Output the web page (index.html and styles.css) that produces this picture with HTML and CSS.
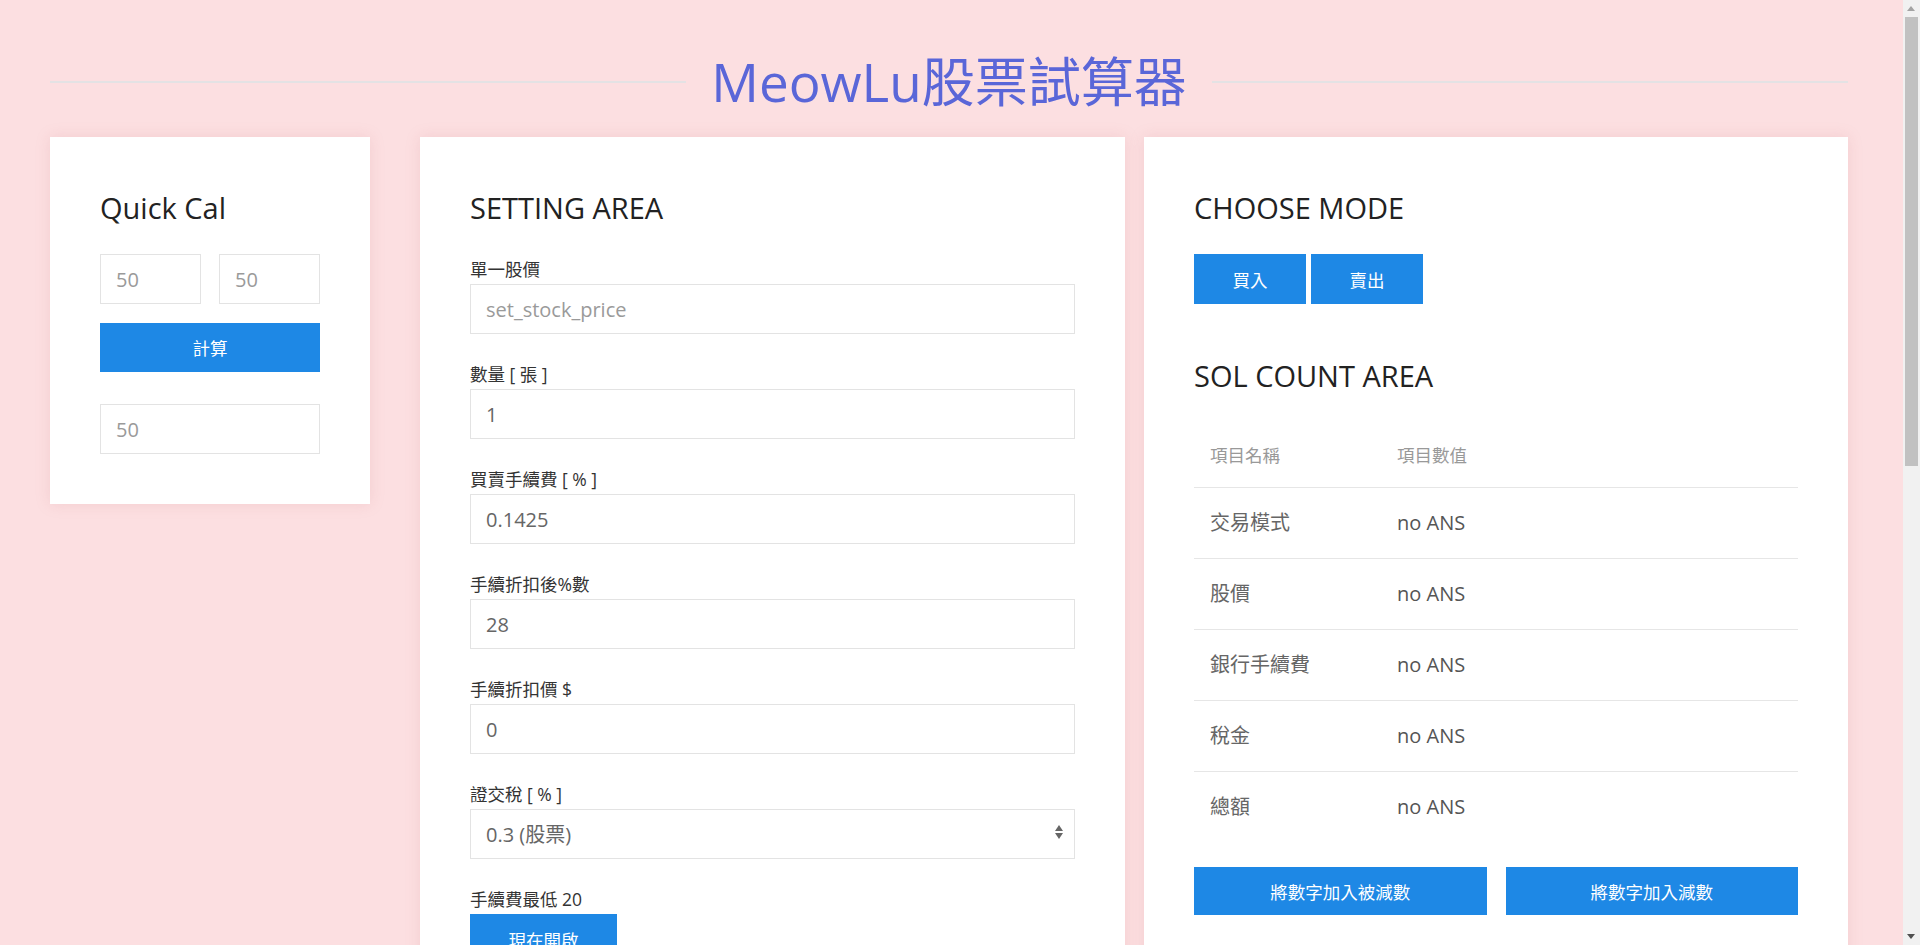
FILE: index.html
```html
<!DOCTYPE html>
<html lang="zh-Hant">
<head>
<meta charset="utf-8">
<title>MeowLu股票試算器</title>
<link rel="stylesheet" href="styles.css">
</head>
<body>
<div class="page">
  <header class="header">
    <span class="line"></span>
    <h1 class="title">MeowLu股票試算器</h1>
    <span class="line"></span>
  </header>

  <main class="cards">
    <section class="card card-quick">
      <h2 class="card-title">Quick Cal</h2>
      <div class="quick-row">
        <input class="field" type="text" placeholder="50">
        <input class="field" type="text" placeholder="50">
      </div>
      <button class="btn btn-block">計算</button>
      <input class="field quick-result" type="text" placeholder="50">
    </section>

    <section class="card card-setting">
      <h2 class="card-title">SETTING AREA</h2>
      <div class="group">
        <label class="label">單一股價</label>
        <input class="field" type="text" placeholder="set_stock_price">
      </div>
      <div class="group">
        <label class="label">數量 [ 張 ]</label>
        <input class="field" type="text" value="1">
      </div>
      <div class="group">
        <label class="label">買賣手續費 [ % ]</label>
        <input class="field" type="text" value="0.1425">
      </div>
      <div class="group">
        <label class="label">手續折扣後%數</label>
        <input class="field" type="text" value="28">
      </div>
      <div class="group">
        <label class="label">手續折扣價 $</label>
        <input class="field" type="text" value="0">
      </div>
      <div class="group">
        <label class="label">證交稅 [ % ]</label>
        <div class="select-wrap">
          <select class="field select">
            <option>0.3 (股票)</option>
            <option>0.1 (ETF)</option>
          </select>
        </div>
      </div>
      <div class="group-last">
        <label class="label">手續費最低 20</label>
        <button class="btn">現在開啟</button>
      </div>
    </section>

    <section class="card card-mode">
      <h2 class="card-title">CHOOSE MODE</h2>
      <div class="mode-btns">
        <button class="btn">買入</button>
        <button class="btn">賣出</button>
      </div>
      <h2 class="card-title">SOL COUNT AREA</h2>
      <table class="result">
        <colgroup><col class="col-name"><col></colgroup>
        <thead>
          <tr><th>項目名稱</th><th>項目數值</th></tr>
        </thead>
        <tbody>
          <tr><td>交易模式</td><td class="val">no ANS</td></tr>
          <tr><td>股價</td><td class="val">no ANS</td></tr>
          <tr><td>銀行手續費</td><td class="val">no ANS</td></tr>
          <tr><td>稅金</td><td class="val">no ANS</td></tr>
          <tr><td>總額</td><td class="val">no ANS</td></tr>
        </tbody>
      </table>
      <div class="action-row">
        <button class="btn btn-wide">將數字加入被減數</button>
        <button class="btn btn-wide">將數字加入減數</button>
      </div>
    </section>
  </main>
</div>

<div class="scrollbar" aria-hidden="true">
  <span class="sb-up"></span>
  <span class="sb-thumb"></span>
  <span class="sb-down"></span>
</div>
</body>
</html>
```

FILE: styles.css
```css
* {
  box-sizing: border-box;
}

body {
  margin: 0;
  background: #fcdfe1;
  font-family: "Open Sans", "Noto Sans CJK TC", sans-serif;
  color: #333;
}

.page {
  min-height: 1920px;
  padding: 47px 72px 0 50px;
}

/* simulated classic scrollbar overlaying the right edge */
.scrollbar {
  position: fixed;
  top: 0;
  right: 0;
  width: 17px;
  height: 100vh;
  background: #f1f1f1;
}

.sb-up,
.sb-down {
  position: absolute;
  left: 4px;
  width: 0;
  height: 0;
  border-left: 4.5px solid transparent;
  border-right: 4.5px solid transparent;
}

.sb-up {
  top: 6px;
  border-bottom: 5px solid #a3a3a3;
}

.sb-down {
  bottom: 6px;
  border-top: 5px solid #505050;
}

.sb-thumb {
  position: absolute;
  top: 17px;
  left: 2px;
  right: 2px;
  height: 449px;
  background: #c1c1c1;
}

.header {
  display: flex;
  align-items: center;
  height: 70px;
  margin-bottom: 20px;
}

.header .line {
  flex: 1;
  height: 2px;
  background: #e4e2e4;
}

.title {
  margin: 0 25px;
  font-size: 53px;
  font-weight: 400;
  line-height: 70px;
  color: #5a66d8;
  white-space: nowrap;
}

.cards {
  display: flex;
  align-items: flex-start;
}

.card {
  background: #fff;
  padding: 50px;
  box-shadow: 0 0 14px rgba(200, 120, 130, 0.18);
}

.card-quick {
  width: 320px;
}

.card-setting {
  width: 705px;
  margin-left: 50px;
}

.card-mode {
  width: 704px;
  margin-left: 19px;
}

.card-title {
  margin: 0 0 25px;
  font-size: 29px;
  font-weight: 400;
  line-height: 42px;
  color: #222;
}

.field {
  display: block;
  width: 100%;
  height: 50px;
  margin: 0;
  border: 1px solid #e3e3e3;
  border-radius: 0;
  padding: 0 15px;
  background: #fff;
  font-family: "Open Sans", "Noto Sans CJK TC", sans-serif;
  font-size: 20px;
  color: #666;
  outline: none;
}

.field::placeholder {
  color: #9a9a9a;
}

.quick-row {
  display: flex;
  gap: 18px;
}

.quick-row .field {
  flex: 1;
  min-width: 0;
}

.quick-result {
  margin-top: 32px;
}

.btn {
  height: 50px;
  padding: 0 38.5px;
  border: 0;
  border-radius: 0;
  background: #1e88e5;
  color: #fff;
  font-family: "Open Sans", "Noto Sans CJK TC", sans-serif;
  font-size: 17.5px;
  cursor: pointer;
}

.btn-block {
  display: block;
  width: 100%;
  height: 49px;
  margin-top: 19px;
}

.group {
  margin-bottom: 25px;
}

.label {
  display: block;
  font-size: 17.5px;
  line-height: 30px;
  color: #333;
}

.select-wrap {
  position: relative;
}

.select {
  -webkit-appearance: none;
  appearance: none;
}

.select-wrap::before,
.select-wrap::after {
  content: "";
  position: absolute;
  right: 12px;
  width: 0;
  height: 0;
  border-left: 4px solid transparent;
  border-right: 4px solid transparent;
  pointer-events: none;
}

.select-wrap::before {
  top: 16px;
  border-bottom: 6px solid #666;
}

.select-wrap::after {
  top: 24px;
  border-top: 6px solid #666;
}

.mode-btns {
  display: flex;
  gap: 5px;
  margin-bottom: 51px;
}

.mode-btns .btn {
  width: 112px;
  padding: 0;
}

.result {
  width: 100%;
  border-collapse: collapse;
  table-layout: fixed;
  margin-top: -2px;
  margin-bottom: 25px;
}

.col-name {
  width: 187px;
}

.result th {
  text-align: left;
  font-weight: 400;
  font-size: 17.5px;
  line-height: 22px;
  color: #999;
  padding: 24px 16px 21px;
  border-bottom: 1px solid #e6e6e6;
}

.result td {
  font-size: 20px;
  line-height: 22px;
  color: #666;
  padding: 24px 16px;
  border-top: 1px solid #e6e6e6;
}

.result td.val {
  color: #555;
}

.action-row {
  display: flex;
  gap: 19px;
}

.btn-wide {
  flex: 1;
  height: 48px;
  padding: 0;
}
```
